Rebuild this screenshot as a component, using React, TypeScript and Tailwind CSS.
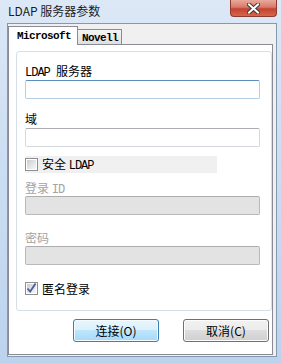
import React from "react";

const tabMono = "font-['Liberation_Mono',monospace] text-[11px] tracking-[-0.6px]";
const mono = "font-['Liberation_Mono',monospace] text-[12px] tracking-[-1px]";

function CloseButton() {
  return (
    <div className="mr-[4px] flex h-[17px] w-[47px] items-center justify-center rounded-b-[4px] border border-t-0 border-[#8d3b31] bg-[linear-gradient(180deg,#e9a99c_0%,#d8796a_45%,#c5432f_55%,#d6654c_100%)]">
      <svg width="13" height="11" viewBox="0 0 13 11">
        <path
          d="M2 1.5 L11 9.5 M11 1.5 L2 9.5"
          stroke="#3b3b3b"
          strokeWidth="4"
          strokeLinecap="square"
        />
        <path
          d="M2 1.5 L11 9.5 M11 1.5 L2 9.5"
          stroke="#ffffff"
          strokeWidth="2"
          strokeLinecap="square"
        />
      </svg>
    </div>
  );
}

function Check({ checked }: { checked?: boolean }) {
  return (
    <span className="flex h-[13px] w-[13px] shrink-0 items-center justify-center border border-[#8e8f8f] bg-white">
      <span className="flex h-[9px] w-[9px] items-center justify-center bg-[linear-gradient(135deg,#c9ccd1_0%,#e6e7e9_60%,#f7f7f7_100%)]">
        {checked && (
          <svg width="9" height="9" viewBox="0 0 9 9" className="overflow-visible">
            <path
              d="M0.5 4.5 L3.2 7.6 L8.6 -0.6"
              fill="none"
              stroke="#4a5f97"
              strokeWidth="1.8"
            />
          </svg>
        )}
      </span>
    </span>
  );
}

export default function App() {
  return (
    <div className="flex h-[363px] w-[281px] flex-col overflow-hidden bg-[linear-gradient(180deg,#dce8f6_0%,#cfe0f3_35%,#bcd3ee_100%)] font-['Noto_Sans_CJK_SC',sans-serif] text-black">
      <div className="flex h-[23px] shrink-0 items-start justify-between">
        <span className="pl-[8px] pt-[3px] text-[12px] leading-[16px] text-[#1b1b1b]">
          LDAP 服务器参数
        </span>
        <CloseButton />
      </div>

      <div className="ml-[7px] mr-[4px] flex h-[334px] shrink-0 flex-col border border-[#8797ad] bg-[#f0f0f0] pt-[2px]">
        <div className="flex h-[18px] items-end">
          <div className={`relative z-10 -mb-px flex h-[19px] w-[70px] items-start border border-b-0 border-[#898c95] bg-white pl-[8px] pt-[3px] font-bold leading-[12px] ${tabMono}`}>
            Microsoft
          </div>
          <div className={`flex h-[15px] w-[44px] items-start border border-b-0 border-l-0 border-[#898c95] bg-[linear-gradient(180deg,#f4f4f4_0%,#ebebeb_50%,#dedede_100%)] pl-[4px] pt-[2px] font-bold leading-[12px] ${tabMono}`}>
            Novell
          </div>
        </div>

        <div className="mb-[1px] mr-[3px] flex flex-1 flex-col border border-[#898c95] bg-white">
          <div className="ml-[7px] mt-[6px] flex h-[260px] w-[256px] flex-col rounded-[3px] border border-[#d5dfe5] pl-[8px] text-[12px] leading-[12px]">
            <div className="mt-[13px] h-[12px]">
              <span className={mono}>LDAP </span>服务器
            </div>
            <div className="mt-[3px] h-[19px] w-[235px] rounded-[2px] border border-[#b6cfe6] border-t-[#5b8dbd] bg-white" />

            <div className="mt-[14px] h-[12px]">域</div>
            <div className="mt-[3px] h-[19px] w-[235px] rounded-[2px] border border-[#d5d9de] border-t-[#abadb3] bg-white" />

            <div className="mt-[9px] flex h-[17px] w-[192px] items-center gap-[4px] bg-[#f0f0f0]">
              <Check />
              <span>
                安全 <span className={mono}>LDAP</span>
              </span>
            </div>

            <div className="mt-[9px] h-[12px] text-[#a3a3a3]">
              登录 <span className={mono}>ID</span>
            </div>
            <div className="mt-[2px] h-[19px] w-[235px] rounded-[2px] border border-[#b9b9b9] border-t-[#adadad] bg-[#e3e3e3]" />

            <div className="mt-[17px] h-[12px] text-[#a3a3a3]">密码</div>
            <div className="mt-[2px] h-[19px] w-[235px] rounded-[2px] border border-[#b9b9b9] border-t-[#adadad] bg-[#e3e3e3]" />

            <div className="mt-[17px] flex h-[13px] items-center gap-[4px]">
              <Check checked />
              <span>匿名登录</span>
            </div>
          </div>

          <div className="mt-[8px] flex justify-end gap-[24px] pr-[3px]">
            <button className="flex h-[23px] w-[86px] items-center justify-center rounded-[3px] border border-[#3c7fb1] bg-[linear-gradient(180deg,#eaf6fd_0%,#d9f0fc_50%,#bee6fd_50%,#a7d9f5_100%)] text-[12px] leading-[14px] shadow-[inset_0_0_0_1px_#f4fbff]">
              连接(O)
            </button>
            <button className="flex h-[23px] w-[86px] items-center justify-center rounded-[3px] border border-[#707070] bg-[linear-gradient(180deg,#f2f2f2_0%,#ebebeb_50%,#dddddd_50%,#cfcfcf_100%)] text-[12px] leading-[14px] shadow-[inset_0_0_0_1px_#fcfcfc]">
              取消(C)
            </button>
          </div>
        </div>
      </div>
    </div>
  );
}
